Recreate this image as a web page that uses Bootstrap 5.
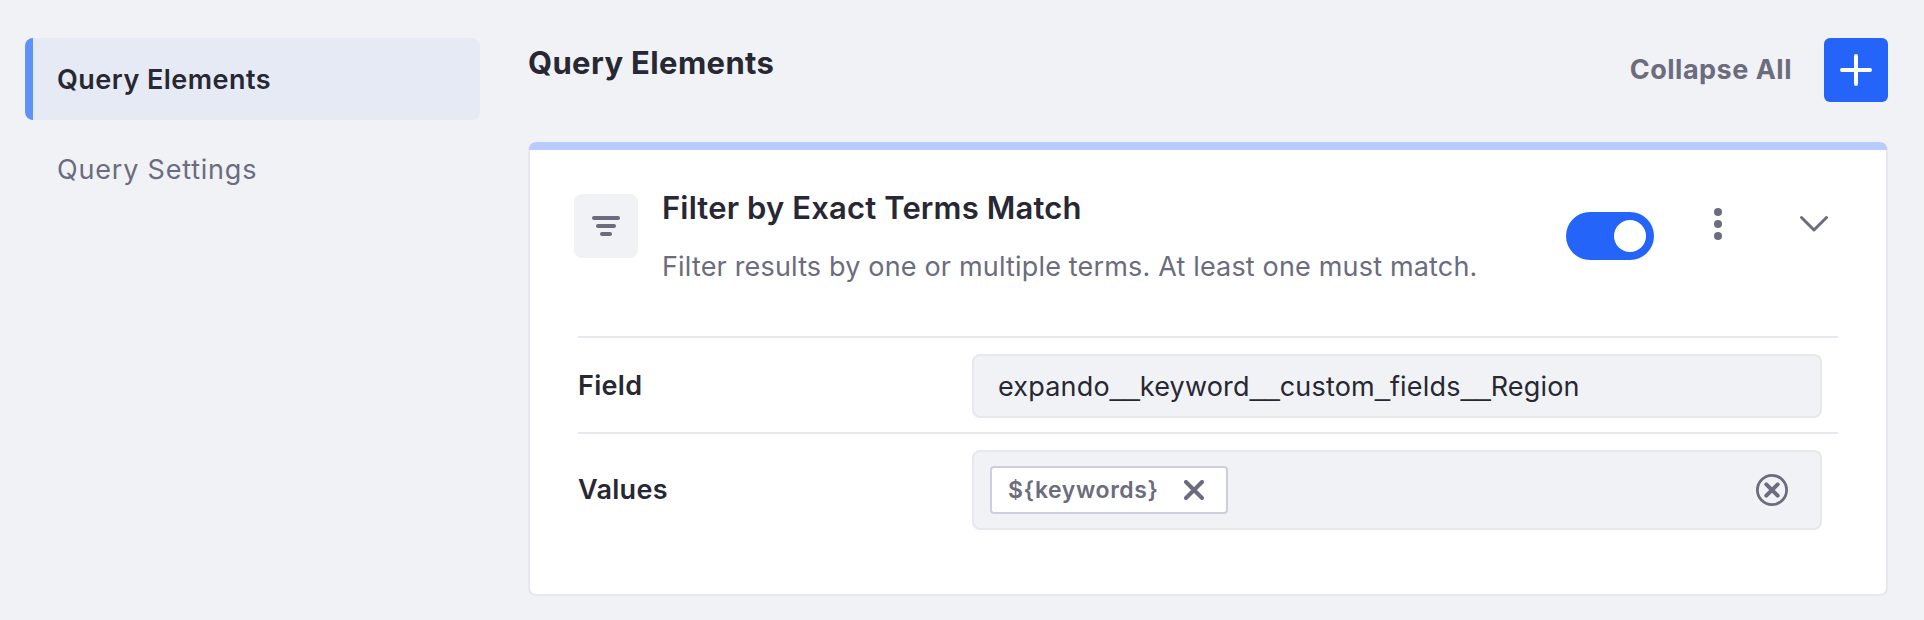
<!DOCTYPE html>
<html lang="en">
<head>
<meta charset="utf-8">
<meta name="viewport" content="width=device-width, initial-scale=1">
<title>Query Elements</title>
<link href="https://cdn.jsdelivr.net/npm/bootstrap@5.3.0/dist/css/bootstrap.min.css" rel="stylesheet">
<style>
  body { background: #f1f2f5; color: #272833; font-family: Inter, sans-serif; font-size: 27px; line-height: 38px; min-height: 620px; }
  svg { display: block; flex: none; }
  .text-muted-gray { color: #6b6c7e; }
  .page { padding: 38px 36px 24px 25px; gap: 48px; }
  .side-menu { width: 455px; gap: 8px; }
  .side-menu .nav-link { height: 82px; padding: 2px 24px 0 32px; color: #6b6c7e; border-radius: 8px; letter-spacing: .8px; }
  .side-menu .nav-link.active { color: #272833; font-weight: 600; letter-spacing: .47px; background: linear-gradient(to right, #5f91fb 8px, #e6eaf4 8px); }
  .page-title { font-size: 31px; line-height: 42px; font-weight: 700; letter-spacing: .36px; margin: 4px 0 0; }
  .collapse-all { font-weight: 700; letter-spacing: .5px; margin-right: 32px; }
  .btn-add { width: 64px; height: 64px; border-radius: 6px; background: #2464f9; }
  .element-card { margin-top: 40px; border: 2px solid #e7e7ed; border-top: 0; border-radius: 8px; }
  .card-strip { height: 8px; margin: 0 -1px; background: #b7ccfc; border-radius: 7px 7px 0 0; }
  .element-head { height: 186px; padding: 35px 56px 0 44px; }
  .element-icon { width: 64px; height: 64px; margin: 9px 24px 0 0; background: #f1f2f5; border-radius: 8px; }
  .element-title { font-size: 31px; line-height: 46px; font-weight: 600; letter-spacing: .15px; margin: 0; }
  .element-text { line-height: 42px; margin: 15px 0 0; letter-spacing: .17px; }
  .toggle { width: 88px; height: 48px; margin: 27px 48px 0 0; padding: 0 8px; background: #2464f9; border-radius: 24px; }
  .toggle-knob { width: 32px; height: 32px; }
  .head-icon { margin-top: 23px; }
  .head-icon.kebab { margin-right: 64px; }
  .element-body { padding: 0 48px 64px; }
  .field-line { border-top: 2px solid #e7e7ed; padding: 16px 16px 14px 0; }
  .field-line:last-child { padding-bottom: 0; }
  .field-name { width: 394px; font-weight: 600; letter-spacing: .3px; }
  .field-box { height: 64px; background: #f1f2f5; border: 2px solid #e7e7ed; border-radius: 8px; }
  .field-box.is-text { padding: 2px 24px 0; letter-spacing: .18px; }
  .field-box.is-tags { height: 80px; padding: 0 32px 0 16px; }
  .us { font-family: "Liberation Sans", sans-serif; letter-spacing: 0; line-height: 0; vertical-align: 1.5px; }
  .tag { height: 48px; padding: 0 22px 0 16px; background: #fff; border: 2px solid #cdced9; border-radius: 4px; }
  .tag-text { font-size: 23px; font-weight: 600; letter-spacing: .6px; width: 176px; }
</style>
</head>
<body>
<div class="page d-flex align-items-start">
  <nav class="side-menu nav flex-column flex-shrink-0">
    <a class="nav-link active d-flex align-items-center" href="#">Query Elements</a>
    <a class="nav-link d-flex align-items-center" href="#">Query Settings</a>
  </nav>

  <main class="flex-grow-1">
    <div class="d-flex align-items-start justify-content-between">
      <h1 class="page-title">Query Elements</h1>
      <div class="d-flex align-items-center">
        <span class="collapse-all text-muted-gray">Collapse All</span>
        <button type="button" class="btn-add btn p-0 border-0 d-flex align-items-center justify-content-center" aria-label="Add">
          <svg width="32" height="32" viewBox="0 0 32 32" fill="none" stroke="#fff" stroke-width="4" stroke-linecap="round"><path d="M16 2v28M2 16h28"/></svg>
        </button>
      </div>
    </div>

    <section class="element-card bg-white">
      <div class="card-strip"></div>
      <div class="element-head d-flex align-items-start">
        <div class="element-icon d-flex align-items-center justify-content-center flex-shrink-0">
          <svg width="28" height="28" viewBox="0 0 28 28" fill="#6b6c7e"><rect y="4" width="28" height="4" rx="2"/><rect x="4" y="12" width="20" height="4" rx="2"/><rect x="8" y="20" width="12" height="4" rx="2"/></svg>
        </div>
        <div class="flex-grow-1">
          <h2 class="element-title">Filter by Exact Terms Match</h2>
          <p class="element-text text-muted-gray">Filter results by one or multiple terms. At least one must match.</p>
        </div>
        <div class="toggle d-flex align-items-center justify-content-end flex-shrink-0" role="switch" aria-checked="true"><span class="toggle-knob bg-white rounded-circle"></span></div>
        <svg class="head-icon kebab" width="32" height="32" viewBox="0 0 32 32" fill="#6b6c7e"><circle cx="16" cy="4" r="4"/><circle cx="16" cy="16" r="4"/><circle cx="16" cy="28" r="4"/></svg>
        <svg class="head-icon" width="32" height="32" viewBox="0 0 32 32" fill="none" stroke="#6b6c7e" stroke-width="3" stroke-linecap="round" stroke-linejoin="round"><path d="M3.500 9.500 16 22 28.500 9.500"/></svg>
      </div>

      <div class="element-body">
        <div class="field-line d-flex align-items-center">
          <label class="field-name flex-shrink-0">Field</label>
          <div class="field-box is-text flex-grow-1 d-flex align-items-center"><span>expando<span class="us">__</span>keyword<span class="us">__</span>custom<span class="us">_</span>fields<span class="us">__</span>Region</span></div>
        </div>
        <div class="field-line d-flex align-items-center">
          <label class="field-name flex-shrink-0">Values</label>
          <div class="field-box is-tags flex-grow-1 d-flex align-items-center justify-content-between">
            <div class="tag d-flex align-items-center">
              <span class="tag-text text-muted-gray">${keywords}</span>
              <svg width="20" height="20" viewBox="0 0 20 20" fill="none" stroke="#6b6c7e" stroke-width="4" stroke-linecap="round"><path d="m2 2 16 16M18 2 2 18"/></svg>
            </div>
            <svg width="32" height="32" viewBox="0 0 32 32" fill="none" stroke="#6b6c7e" stroke-linecap="round"><circle cx="16" cy="16" r="14.600" stroke-width="2.800"/><path stroke-width="4" d="m10.300 10.300 11.400 11.400M21.700 10.300 10.300 21.700"/></svg>
          </div>
        </div>
      </div>
    </section>
  </main>
</div>
<script src="https://cdn.jsdelivr.net/npm/bootstrap@5.3.0/dist/js/bootstrap.bundle.min.js"></script>
</body>
</html>
